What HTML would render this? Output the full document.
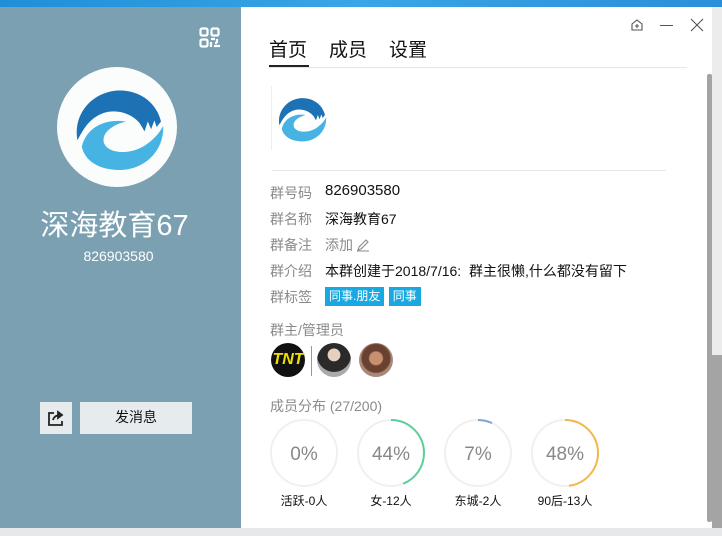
<!DOCTYPE html>
<html><head><meta charset="utf-8"><style>
*{margin:0;padding:0;box-sizing:border-box}
body{width:722px;height:536px;position:relative;overflow:hidden;background:#fff;font-family:"Liberation Sans","Noto Sans CJK SC",sans-serif}
.a{position:absolute}
.lbl{color:#8a8a8a;font-size:14px}
.val{color:#111;font-size:14px}
.tag{background:#1aa8e0;color:#fff;font-size:12px;padding:1px 4px;line-height:17px;display:inline-block}
.pct{font-size:19px;color:#888;text-align:center;width:68px;line-height:68px}
.cap{font-size:12px;color:#111;text-align:center;width:90px}
</style></head><body>
<svg width="0" height="0" style="position:absolute"><defs>
<symbol id="logo" viewBox="0 0 100 100">
<path d="M14 62 C10 40 25 20 48 17 C70 15 86 28 90 45 L86 50 L84 44 L81 52 L78 45 L75 54 L71 47 C62 36 45 32 32 40 C22 46 18 55 14 62Z" fill="#1c72b5"/>
<path d="M18 68 C22 50 40 42 58 45 C46 48 36 55 38 64 C41 74 60 76 75 67 C83 62 89 55 92 49 C93 71 76 88 55 89 C36 90 21 82 18 68Z" fill="#46b3e3"/>
</symbol></defs></svg>
<div class="a" style="left:0;top:0;width:722px;height:7px;background:linear-gradient(90deg,#1f8fd6,#3aa5e8,#2a8fd8)"></div>
<div class="a" style="left:0;top:7px;width:241px;height:521px;background:#7aa0b2"></div>
<div class="a" style="left:0;top:528px;width:722px;height:8px;background:#e6e8ea"></div>
<svg class="a" style="left:199px;top:27px" width="22" height="22" viewBox="0 0 22 22" fill="none" stroke="#fff" stroke-width="2.2">
<rect x="1.5" y="1.5" width="7" height="7" rx="1.5"/><rect x="12.5" y="1.5" width="7" height="7" rx="1.5"/><rect x="1.5" y="12.5" width="7" height="7" rx="1.5"/>
<path d="M12 12h4M18 12v4M12 15v5M15 19h6M16 16h2" /></svg>
<div class="a" style="left:57px;top:67px;width:120px;height:120px;border-radius:50%;background:#fbfcfc"></div>
<svg class="a" style="left:62px;top:72px" width="110" height="110"><use href="#logo"/></svg>
<div class="a" style="left:0;top:202px;width:229px;text-align:center;color:#fff;font-size:29px">深海教育67</div>
<div class="a" style="left:0;top:248px;width:237px;text-align:center;color:#fff;font-size:14px">826903580</div>
<div class="a" style="left:40px;top:402px;width:32px;height:32px;background:#e6ebee"></div>
<svg class="a" style="left:47px;top:409px" width="18" height="18" viewBox="0 0 18 18" fill="none" stroke="#222" stroke-width="1.8"><path d="M7 4H2v12h13v-4"/><path d="M6 11c1-4 4-5 8-5" /><path d="M11 3l4 3-4 3z" fill="#222"/></svg>
<div class="a" style="left:80px;top:402px;width:112px;height:32px;background:#e6ebee;text-align:center;line-height:30px;font-size:14px;color:#111">发消息</div>
<svg class="a" style="left:630px;top:18px" width="14" height="14" viewBox="0 0 14 14" fill="none" stroke="#555" stroke-width="1.1"><path d="M2 6L7 2l5 4v6H2z"/><path d="M5 8h4M7 6v4"/></svg>
<div class="a" style="left:660px;top:25px;width:13px;height:1px;background:#555"></div>
<svg class="a" style="left:690px;top:18px" width="14" height="14" viewBox="0 0 14 14" stroke="#555" stroke-width="1.1"><path d="M1 1l12 12M13 1L1 13"/></svg>
<div class="a" style="left:269px;top:35px;font-size:19px;color:#111">首页</div>
<div class="a" style="left:329px;top:35px;font-size:19px;color:#111">成员</div>
<div class="a" style="left:389px;top:35px;font-size:19px;color:#111">设置</div>
<div class="a" style="left:269px;top:67px;width:418px;height:1px;background:#e6e6e6"></div>
<div class="a" style="left:269px;top:65px;width:40px;height:2px;background:#222"></div>
<div class="a" style="left:271px;top:86px;width:1px;height:64px;background:#eee"></div>
<svg class="a" style="left:271px;top:88px" width="60" height="60"><use href="#logo"/></svg>
<div class="a" style="left:272px;top:170px;width:394px;height:1px;background:#e8e8e8"></div>
<div class="a lbl" style="left:270px;top:183px">群号码</div><div class="a val" style="left:325px;top:182px;font-size:15px">826903580</div>
<div class="a lbl" style="left:270px;top:209px">群名称</div><div class="a val" style="left:325px;top:209px">深海教育67</div>
<div class="a lbl" style="left:270px;top:235px">群备注</div><div class="a lbl" style="left:325px;top:235px">添加</div>
<svg class="a" style="left:356px;top:238px" width="14" height="14" viewBox="0 0 14 14" fill="none" stroke="#888" stroke-width="1.1"><path d="M2 12l1-3 7-7 2 2-7 7zM1 13h12"/></svg>
<div class="a lbl" style="left:270px;top:261px">群介绍</div><div class="a val" style="left:325px;top:261px">本群创建于2018/7/16:&nbsp; 群主很懒,什么都没有留下</div>
<div class="a lbl" style="left:270px;top:287px">群标签</div>
<div class="a" style="left:325px;top:287px"><span class="tag">同事.朋友</span> <span class="tag">同事</span></div>
<div class="a lbl" style="left:270px;top:320px">群主/管理员</div>
<div class="a" style="left:271px;top:343px;width:34px;height:34px;border-radius:50%;background:#111;color:#f0e000;font-weight:bold;font-style:italic;font-size:16px;text-align:center;line-height:34px">TNT</div>
<div class="a" style="left:311px;top:346px;width:1px;height:30px;background:#999"></div>
<div class="a" style="left:317px;top:343px;width:34px;height:34px;border-radius:50%;background:radial-gradient(circle at 50% 35%,#e8d0c0 0 22%,#2a2a2a 24% 60%,#aaa 62%)"></div>
<div class="a" style="left:359px;top:343px;width:34px;height:34px;border-radius:50%;background:radial-gradient(circle at 50% 45%,#c89070 0 25%,#6a4030 30% 55%,#a88878 60%)"></div>
<div class="a lbl" style="left:270px;top:396px">成员分布 (27/200)</div>
<svg class="a" style="left:270px;top:419px" width="340" height="70" fill="none" stroke-width="2">
<g transform="translate(34,34)"><circle r="33" stroke="#f0f0f0"/></g>
<g transform="translate(121,34)"><circle r="33" stroke="#f0f0f0"/><circle r="33" stroke="#5ccf98" stroke-dasharray="91 300" transform="rotate(-90)"/></g>
<g transform="translate(208,34)"><circle r="33" stroke="#f0f0f0"/><circle r="33" stroke="#7aa6d8" stroke-dasharray="14.5 300" transform="rotate(-90)"/></g>
<g transform="translate(295,34)"><circle r="33" stroke="#f0f0f0"/><circle r="33" stroke="#f2b84a" stroke-dasharray="99.5 300" transform="rotate(-90)"/></g>
</svg>
<div class="a pct" style="left:270px;top:421px">0%</div>
<div class="a pct" style="left:357px;top:421px">44%</div>
<div class="a pct" style="left:444px;top:421px">7%</div>
<div class="a pct" style="left:531px;top:421px">48%</div>
<div class="a cap" style="left:259px;top:492px">活跃-0人</div>
<div class="a cap" style="left:346px;top:492px">女-12人</div>
<div class="a cap" style="left:433px;top:492px">东城-2人</div>
<div class="a cap" style="left:520px;top:492px">90后-13人</div>
<div class="a" style="left:712px;top:7px;width:10px;height:521px;background:#ececec"></div>
<div class="a" style="left:712px;top:355px;width:10px;height:173px;background:#a4a4a4"></div>
<div class="a" style="left:707px;top:74px;width:5px;height:448px;background:#a4a4a4;border-radius:2px"></div>
</body></html>
